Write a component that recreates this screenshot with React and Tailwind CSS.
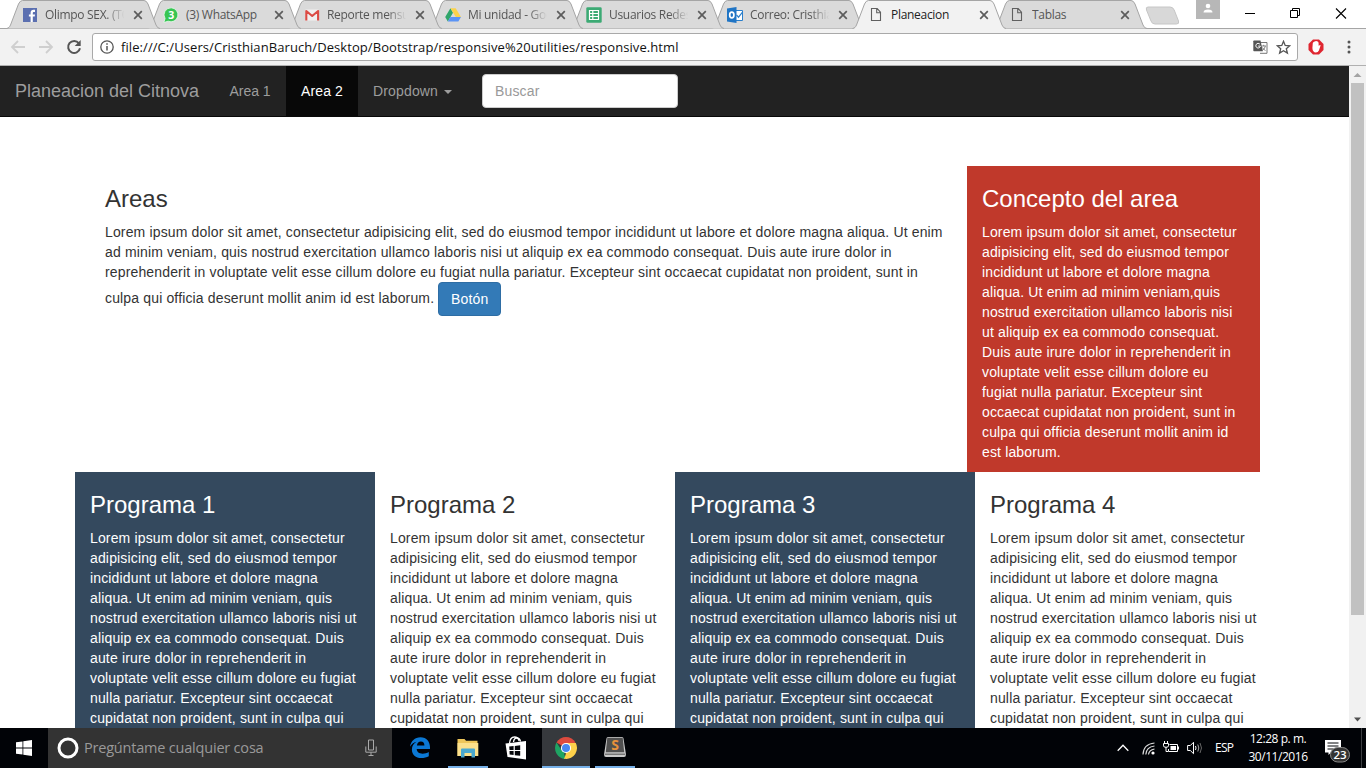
import React from "react";

const AREA_LINES = [
  "Lorem ipsum dolor sit amet, consectetur adipisicing elit, sed do eiusmod tempor incididunt ut labore et dolore magna aliqua. Ut enim",
  "ad minim veniam, quis nostrud exercitation ullamco laboris nisi ut aliquip ex ea commodo consequat. Duis aute irure dolor in",
  "reprehenderit in voluptate velit esse cillum dolore eu fugiat nulla pariatur. Excepteur sint occaecat cupidatat non proident, sunt in",
  "culpa qui officia deserunt mollit anim id est laborum. ",
];
const CONCEPT_LINES = [
  "Lorem ipsum dolor sit amet, consectetur",
  "adipisicing elit, sed do eiusmod tempor",
  "incididunt ut labore et dolore magna",
  "aliqua. Ut enim ad minim veniam,quis",
  "nostrud exercitation ullamco laboris nisi",
  "ut aliquip ex ea commodo consequat.",
  "Duis aute irure dolor in reprehenderit in",
  "voluptate velit esse cillum dolore eu",
  "fugiat nulla pariatur. Excepteur sint",
  "occaecat cupidatat non proident, sunt in",
  "culpa qui officia deserunt mollit anim id",
  "est laborum.",
];
const PROGRAM_LINES = [
  "Lorem ipsum dolor sit amet, consectetur",
  "adipisicing elit, sed do eiusmod tempor",
  "incididunt ut labore et dolore magna",
  "aliqua. Ut enim ad minim veniam, quis",
  "nostrud exercitation ullamco laboris nisi ut",
  "aliquip ex ea commodo consequat. Duis",
  "aute irure dolor in reprehenderit in",
  "voluptate velit esse cillum dolore eu fugiat",
  "nulla pariatur. Excepteur sint occaecat",
  "cupidatat non proident, sunt in culpa qui",
];

const FacebookIcon = () => (
  <svg width="16" height="16" viewBox="0 0 16 16">
    <rect x="1" y="1" width="14" height="14" fill="#5b6fb0" />
    <path d="M8.6 15V9.6H6.9V7.4h1.7V5.8c0-2 1.1-3 2.9-3H13V5h-1c-.9 0-1.2.4-1.2 1.1v1.3H13l-.3 2.2h-1.9V15z" fill="#fff" />
  </svg>
);
const WhatsIcon = () => (
  <svg width="16" height="16" viewBox="0 0 16 16">
    <path d="M8.2 .8a7 7 0 1 1-3.1 13.400L.8 15.500l1.300-4A7 7 0 0 1 8.200.8z" fill="#37c553" stroke="#eefaf0" strokeWidth=".8" />
    <text x="8.2" y="11.8" fontSize="10.5" fontWeight="700" textAnchor="middle" fill="#fff" fontFamily="Open Sans, sans-serif">3</text>
  </svg>
);
const GmailIcon = () => (
  <svg width="16" height="16" viewBox="0 0 16 16">
    <rect x="1.5" y="2.5" width="13" height="11" fill="#f1efef" />
    <path d="M2.3 13.5V4l5.9 5 5.9-5v9.5" fill="none" stroke="#dc4b44" strokeWidth="2.1" strokeLinejoin="round" />
  </svg>
);
const DriveIcon = () => (
  <svg width="16" height="16" viewBox="0 0 16 16">
    <path d="M5.4 1.2 0.2 10l2.6 4.6L8 5.7z" fill="#2fa56a" />
    <path d="M5.4 1.2h5.3L16 10h-5.2z" fill="#fbd24b" />
    <path d="M5.4 10H16l-2.7 4.6H2.8z" fill="#5b94f5" />
  </svg>
);
const SheetsIcon = () => (
  <svg width="16" height="16" viewBox="0 0 16 16">
    <rect x="0.3" y="0.3" width="15.4" height="15.4" rx="1.3" fill="#3caa74" />
    <path d="M3.5 3.5h9v9h-9zM3.5 6.5h9M3.5 9.5h9M6.8 3.5v9" fill="none" stroke="#fff" strokeWidth="1.2" />
  </svg>
);
const OutlookIcon = () => (
  <svg width="16" height="16" viewBox="0 0 16 16">
    <path d="M8 3.5h7.5v10H8z" fill="#fff" stroke="#2a7fcb" />
    <path d="m9.5 7.8 2 2.4 4-5" fill="none" stroke="#2a7fcb" strokeWidth="1.2" />
    <path d="M0 1.5 9.5 0v16L0 14.5z" fill="#2075c5" />
    <ellipse cx="4.8" cy="8" rx="2.1" ry="2.9" fill="none" stroke="#fff" strokeWidth="1.7" />
  </svg>
);
const PageIcon = () => (
  <svg width="16" height="16" viewBox="0 0 16 16">
    <path d="M3.5 1.5h5.7l3.3 3.8v8.2h-9zM8.7 1.5v4.2h3.8" fill="none" stroke="#606060" strokeWidth="1.1" />
  </svg>
);

const TABS = [
  { t: "Olimpo SEX. (TO", icon: <FacebookIcon />, z: "z-[7]", fade: true },
  { t: "(3) WhatsApp", icon: <WhatsIcon />, z: "z-[6]" },
  { t: "Reporte mensu", icon: <GmailIcon />, z: "z-[5]", fade: true },
  { t: "Mi unidad - Goo", icon: <DriveIcon />, z: "z-[4]", fade: true },
  { t: "Usuarios Redes", icon: <SheetsIcon />, z: "z-[3]", fade: true },
  { t: "Correo: Cristhian", icon: <OutlookIcon />, z: "z-[2]", fade: true },
  { t: "Planeacion", icon: <PageIcon />, z: "z-10", active: true },
  { t: "Tablas", icon: <PageIcon />, z: "z-[1]" },
];

function Tab({ tab }) {
  const fill = tab.active ? "#f2f2f2" : "#dadada";
  return (
    <div className={`relative flex h-[29px] w-[154px] shrink-0 items-center pt-[1px] pl-4 -mr-[13px] ${tab.z}`}>
      <svg className="absolute top-0 left-0" width="154" height="29" viewBox="0 0 154 29">
        <path d={tab.active ? "M0.5 29C3 28.5 3.5 27 4.5 25L12.5 4Q14 .5 16.5.5H138Q140.5.5 142 4L150 25Q151.5 28.5 154 29z" : "M0.5 28.5C3 28 3.5 27 4.5 25L12.5 4Q14 .5 16.5.5H138Q140.5.5 142 4L150 25Q151.5 28.5 154 28.5z"} fill={fill} />
        <path d="M0.5 28.5C3 28 3.5 27 4.5 25L12.5 4Q14 .5 16.5.5H138Q140.5.5 142 4L150 25Q151.5 28.5 154 28.5" fill="none" stroke="#a5a5a5" />
      </svg>
      <span className="relative">{tab.icon}</span>
      <span className={`relative ml-[7px] w-[81px] overflow-hidden text-[12px] leading-[16px] tracking-[-0.3px] whitespace-nowrap ${tab.active ? "text-[#222]" : "text-[#555]"} ${tab.fade ? "[mask-image:linear-gradient(to_right,#000_74%,transparent_98%)]" : ""}`}>{tab.t}</span>
      <svg className="relative ml-[7px]" width="10" height="10" viewBox="0 0 10 10">
        <path d="M1.2 1.2l7.6 7.6M8.800 1.2L1.2 8.8" stroke="#5c5c5c" strokeWidth="1.7" />
      </svg>
    </div>
  );
}

function TabStrip() {
  return (
    <div className="relative flex h-[29px] bg-white pl-[6px] shadow-[inset_0_-1px_0_#a5a5a5]">
      {TABS.map((t) => <Tab key={t.t} tab={t} />)}
      <svg className="mt-[6px] ml-[11px] shrink-0" width="36" height="20" viewBox="0 0 36 20">
        <path d="M3 1h22q3 0 4.2 3l4.300 11q1 3-2 3H10q-3 0-4-3L1.5 4Q.5 1 3 1z" fill="#d8d8d8" stroke="#c6c6c6" />
      </svg>
      <div className="ml-[15px] flex h-[19px] w-[24px] justify-center bg-[#b7b7b7]">
        <svg width="12" height="16" viewBox="0 0 12 16">
          <circle cx="6" cy="6" r="2.3" fill="#fff" />
          <path d="M1.5 12.5q0-3 4.5-3t4.5 3z" fill="#fff" />
        </svg>
      </div>
      <svg className="ml-[24px]" width="12" height="27" viewBox="0 0 12 27"><path d="M1 13.5h10" stroke="#000" /></svg>
      <svg className="ml-[33px]" width="12" height="27" viewBox="0 0 12 27"><path d="M1.5 10.500h7v7h-7zM3.500 10V8.500h7v7H9" fill="none" stroke="#000" /></svg>
      <svg className="ml-[34px]" width="12" height="27" viewBox="0 0 12 27"><path d="M1 8.500l10 10M11 8.500l-10 10" stroke="#000" strokeWidth="1.1" /></svg>
    </div>
  );
}

function Toolbar() {
  return (
    <div className="flex h-[37px] items-center border-b border-[#b0b0b0] bg-[#f2f2f2] pl-[10px]">
      <svg width="16" height="16" viewBox="0 0 16 16"><path d="M15 8H2.500M8 2L2 8l6 6" fill="none" stroke="#cfcfcf" strokeWidth="1.8" /></svg>
      <svg className="ml-[12px]" width="16" height="16" viewBox="0 0 16 16"><path d="M1 8h12.500M8 2l6 6-6 6" fill="none" stroke="#cfcfcf" strokeWidth="1.8" /></svg>
      <svg className="ml-[12px]" width="16" height="16" viewBox="0 0 16 16">
        <path d="M12.900 4.300A6 6 0 1 0 14 9.300" fill="none" stroke="#555" strokeWidth="2" />
        <path d="M14.700 1v6H8.700z" fill="#555" />
      </svg>
      <div className="ml-[10px] flex h-[28px] w-[1206px] items-center rounded-[3px] border border-[#a9a9a9] bg-white pl-[7px]">
        <svg width="14" height="14" viewBox="0 0 14 14">
          <circle cx="7" cy="7" r="6.2" fill="none" stroke="#555" strokeWidth="1.3" />
          <path d="M7 6v4.500M7 3.300v1.500" stroke="#555" strokeWidth="1.5" />
        </svg>
        <span className="ml-[7px] w-[1132px] text-[13px] leading-[18px] tracking-[0.08px] whitespace-nowrap text-[#111]">file:///C:/Users/CristhianBaruch/Desktop/Bootstrap/responsive%20utilities/responsive.html</span>
        <svg className="shrink-0" width="15" height="14" viewBox="0 0 15 14">
          <path d="M6.500 2.500h7.500v10.800H7" fill="#fff" stroke="#777" />
          <path d="M8.500 6h4.500M10.700 4.800V6M9 10.500q3-1.500 3.300-4.300M9.500 7.500q1 2.200 3 3" fill="none" stroke="#777" strokeWidth=".9" />
          <path d="M1 .5h6.500l2.300 10.700H1q-.7 0-.7-.7V1.200Q.3.500 1 .5z" fill="#555" />
          <path d="M6.900 4.200a2.300 2.300 0 1 0 .5 1.900H5.200" fill="none" stroke="#fff" strokeWidth="1" />
        </svg>
        <svg className="ml-[8px] shrink-0" width="15" height="15" viewBox="0 0 15 15">
          <path d="M7.500 1.300l1.700 4.100 4.500.4-3.400 2.900 1.100 4.400-3.900-2.400-3.900 2.400 1.100-4.400L1.300 5.800l4.500-.4z" fill="none" stroke="#555" strokeWidth="1.3" />
        </svg>
      </div>
      <svg className="ml-[10px]" width="16" height="16" viewBox="0 0 16 16">
        <path d="M5 .5h6L15.500 5v6L11 15.500H5L.5 11V5z" fill="#df2630" />
        <path d="M4.800 4Q5.500 2.300 6.700 2.400 8 1.700 9 2.300q1.500.3 1.600 1.600v2.800l1.500-.8q.7.100.4.900L10.900 11.500q-.9 2-3 2-3.300-.2-3.500-4.500z" fill="#fff" />
      </svg>
      <svg className="ml-[22px]" width="6" height="16" viewBox="0 0 6 16">
        <circle cx="3" cy="3" r="1.5" fill="#555" /><circle cx="3" cy="8" r="1.5" fill="#555" /><circle cx="3" cy="13" r="1.5" fill="#555" />
      </svg>
    </div>
  );
}

function Navbar() {
  return (
    <nav className="flex h-[51px] items-start border-b border-[#080808] bg-[#222] text-[14px] leading-5 text-[#9d9d9d]">
      <span className="w-[214px] py-[15px] pl-[15px] text-[18px] whitespace-nowrap">Planeacion del Citnova</span>
      <span className="w-[72px] py-[15px] text-center">Area 1</span>
      <span className="w-[72px] bg-[#080808] py-[15px] text-center tracking-[0.1px] text-white">Area 2</span>
      <span className="flex w-[109px] items-center py-[15px] pl-[15px] tracking-[0.15px]">
        Dropdown
        <svg className="ml-[6px] mt-[2px]" width="8" height="4" viewBox="0 0 8 4"><path d="M0 0h8L4 4z" fill="#9d9d9d" /></svg>
      </span>
      <input placeholder="Buscar" className="mt-2 ml-[15px] h-[34px] w-[196px] rounded border border-[#ccc] bg-white px-3 py-1.5 text-[14px] tracking-[0.15px] placeholder:text-[#999]" />
    </nav>
  );
}

function Column({ title, lines, className = "", children }) {
  return (
    <section className={`px-[15px] ${className}`}>
      <h3 className="mt-5 mb-[10px] h-[26px] text-[24px] leading-[26px]">{title}</h3>
      <p className="mb-[10px] tracking-[0.15px] whitespace-pre">
        {lines.map((line, i) => (
          <React.Fragment key={line}>
            {i > 0 && <br />}
            {line}
          </React.Fragment>
        ))}
        {children}
      </p>
    </section>
  );
}

function Page() {
  return (
    <main className="h-[662px] w-[1349px] overflow-hidden bg-white text-[14px] leading-5 text-[#333] [font-family:'Liberation_Sans',Arial,sans-serif]">
      <Navbar />
      <div className="mt-[49px] ml-[90px] flex w-[1170px] items-start">
        <Column title="Areas" className="w-[877px]" lines={AREA_LINES}>
          <button className="inline-block h-[34px] w-[63px] rounded border border-[#2e6da4] bg-[#337ab7] text-center align-middle leading-5 text-white">Botón</button>
        </Column>
        <Column title="Concepto del area" className="w-[293px] bg-[#c0392b] text-white" lines={CONCEPT_LINES} />
      </div>
      <div className="ml-[75px] grid w-[1200px] grid-cols-4">
        <Column title="Programa 1" className="bg-[#34495e] text-white" lines={PROGRAM_LINES} />
        <Column title="Programa 2" lines={PROGRAM_LINES} />
        <Column title="Programa 3" className="bg-[#34495e] text-white" lines={PROGRAM_LINES} />
        <Column title="Programa 4" lines={PROGRAM_LINES} />
      </div>
    </main>
  );
}

function Scrollbar() {
  return (
    <div className="flex h-[662px] w-[17px] flex-col items-center justify-between bg-[#f1f1f1]">
      <div className="flex flex-col items-center">
        <svg width="17" height="17" viewBox="0 0 17 17"><path d="M4.500 11l4-4 4 4z" fill="#a3a3a3" /></svg>
        <div className="h-[532px] w-[13px] bg-[#c1c1c1]" />
      </div>
      <svg width="17" height="17" viewBox="0 0 17 17"><path d="M5 6.500l3.500 4 3.500-4z" fill="#505050" /></svg>
    </div>
  );
}

function Slot({ children, className = "", line }) {
  return (
    <div className={`flex h-10 w-12 flex-col items-center justify-between ${className}`}>
      <div className="flex h-[38px] items-center pt-[1px]">{children}</div>
      <div className={`h-[2px] ${line || ""}`} />
    </div>
  );
}

function Taskbar() {
  return (
    <footer className="flex h-10 items-center bg-[#010307] text-white">
      <div className="flex w-12 justify-center">
        <svg width="16" height="16" viewBox="0 0 16 16"><path d="M0 2.300l6.500-.9v6.200H0zM7.300 1.300L16 0v7.600H7.300zM0 8.400h6.500v6.200L0 13.700zM7.300 8.400H16V16l-8.700-1.300z" fill="#fff" /></svg>
      </div>
      <div className="flex h-10 w-[344px] items-center bg-[#333] pl-[9px]">
        <svg width="22" height="22" viewBox="0 0 22 22"><circle cx="11" cy="11" r="9" fill="none" stroke="#fff" strokeWidth="3" /></svg>
        <span className="ml-[5px] w-[281px] text-[14.5px] tracking-[-0.2px] whitespace-nowrap text-[#9a9a9a]">Pregúntame cualquier cosa</span>
        <svg width="12" height="18" viewBox="0 0 12 18"><path d="M3.500 1h5v10h-5zM.8 7.500v5.700h10.400V7.500M6 13.200v3M3.500 16.500h5" fill="none" stroke="#aaa" /></svg>
      </div>
      <div className="ml-1 flex">
        <Slot>
          <svg width="20" height="21" viewBox="0 0 20 21">
            <path d="M0 9.800C.8 4.100 4.800.2 10.500.2 16.800.2 20 4.900 20 10.200v1.900H6.700c.2 3.200 2.500 4.600 5.900 4.600 2.300 0 4.300-.6 6.200-1.700v4.200c-2 1.200-4.700 1.800-7.400 1.800C5.600 21 1.900 17.700 1.900 12.400c0-3.200 1.700-6 4.600-7.600C3.500 5.300 1.500 7.300 0 9.800zM6.900 8.400h7.500c0-2.300-1.200-3.800-3.500-3.800-2.200 0-3.600 1.500-4 3.800z" fill="#0b78d4" />
          </svg>
        </Slot>
        <Slot line="w-10 bg-[#76b0e8]">
          <svg width="22" height="20" viewBox="0 0 22 20">
            <path d="M.5 1h7l1.500 1.800h11.500V18H.5z" fill="#eec65a" />
            <path d="M.5 5h20.800v13H.5z" fill="#fbe08c" />
            <path d="M4 19.500V11.500q0-1 1-1h12q1 0 1 1v8h-3.500V15h-7v4.500z" fill="#4aa8cf" />
          </svg>
        </Slot>
        <Slot>
          <svg width="22" height="24" viewBox="0 0 22 24">
            <path d="M4.500 7.500Q5 1 9.500 1q3.500 0 4.700 4" fill="none" stroke="#fff" strokeWidth="1.3" />
            <path d="M8.500 6q.5-4 3.300-4 3 0 3.700 3.500" fill="none" stroke="#fff" strokeWidth="1.3" />
            <path d="M.5 7.500L21 5v18.500L2.500 21z" fill="#fff" />
            <path d="M4.200 10.500l4.400-.5v4H4.500zM9.800 9.900l5.400-.6V14H9.800zM4.500 15.100h4.100v4l-4-.5zM9.800 15.100h5.400v4.700l-5.400-.6z" fill="#05070b" />
          </svg>
        </Slot>
        <Slot className="ml-[2px] bg-[#36393d]" line="w-12 bg-[#76b0e8]">
          <svg width="22" height="22" viewBox="0 0 22 22">
            <path d="M11 11L1.500 5.500A11 11 0 0 1 20.500 5.500z" fill="#dd4b3e" />
            <path d="M11 11V6h9.800A11 11 0 0 1 10.500 22z" fill="#fdd04a" />
            <path d="M1.500 5.500L6.700 13.500 11 16l-2 .5L10.800 22A11 11 0 0 1 1.500 5.500z" fill="#1fa463" />
            <path d="M15.300 13.500L10.500 22 9 21.800 12 15z" fill="#fdd04a" />
            <circle cx="11" cy="11" r="5.1" fill="#fff" />
            <circle cx="11" cy="11" r="4" fill="#4688f1" />
          </svg>
        </Slot>
        <Slot className="ml-[1px]" line="w-10 bg-[#76b0e8]">
          <svg width="22" height="22" viewBox="0 0 22 22" className="-mt-[2px]">
            <path d="M2.500 2.500Q2.500 1 4 1h14q1.500 0 1.500 1.500L22 18.500Q22 21 20 21H2q-2 0-2-2.500z" fill="#c9c9c9" />
            <path d="M3.300 1.800h15.400l1.500 14.500H1.800z" fill="#505050" />
            <path d="M1 17.500h20l.3 1.500H.7z" fill="#777" />
            <text x="11" y="14" fontSize="14" fontWeight="700" textAnchor="middle" fill="#e8913b" fontFamily="Open Sans, sans-serif">S</text>
          </svg>
        </Slot>
      </div>
      <div className="ml-auto flex h-10 items-center">
        <svg width="12" height="8" viewBox="0 0 12 8"><path d="M.7 6.700L6 1.300l5.300 5.400" fill="none" stroke="#fff" strokeWidth="1.3" /></svg>
        <svg className="ml-[13px]" width="13" height="13" viewBox="0 0 13 13">
          <path d="M1 12.500Q1.500 2 12.500 1M3.800 12.500Q4.300 5 12.500 4M6.500 12.500Q7 8 12.500 7" fill="none" stroke="#ddd" strokeWidth="1.2" />
          <circle cx="11" cy="11" r="1.6" fill="#fff" />
        </svg>
        <svg className="ml-[8px] -mt-[2px]" width="17" height="14" viewBox="0 0 17 14">
          <path d="M6.500 4.500h8v7h-9V9" fill="none" stroke="#fff" /><path d="M7.500 6h5.500v4H7.500zM14.500 6.500H16v3h-1.500z" fill="#fff" />
          <path d="M1.500 1v2.500M4.500 1v2.500M.5 3.500h5v2.300q0 1.500-2.500 1.500T.5 5.800zM3 7v4.500h2" fill="none" stroke="#fff" />
        </svg>
        <svg className="ml-[7px]" width="16" height="14" viewBox="0 0 16 14">
          <path d="M.6 4.500h2.700L6.500 1.300v11.400L3.300 9.500H.6z" fill="none" stroke="#fff" /><path d="M8.500 5q1 2 0 4" fill="none" stroke="#fff" /><path d="M10.800 3.500q2 3.500 0 7" fill="none" stroke="#aaa" /><path d="M13 2q3 5 0 10" fill="none" stroke="#666" />
        </svg>
        <span className="ml-[12px] w-[20px] text-[12px] tracking-[-0.7px]">ESP</span>
        <div className="ml-[13px] flex w-[60px] flex-col items-center text-[12px] leading-[18px] tracking-[-0.45px] whitespace-nowrap">
          <span>12:28 p. m.</span>
          <span>30/11/2016</span>
        </div>
        <svg className="ml-[16px] mt-[1px]" width="27" height="28" viewBox="0 0 27 28">
          <path d="M1 5h16v12.500H7L4.500 20v-2.500H1z" fill="#fff" />
          <path d="M3.500 8h11M3.500 11h11M3.500 14h6" stroke="#05070b" />
          <rect x="6.5" y="12.5" width="19" height="14.5" rx="7.2" fill="#333" stroke="#888" />
          <text x="16" y="24" fontSize="11.5" textAnchor="middle" fill="#fff" fontFamily="Open Sans, sans-serif" fontWeight="600">23</text>
        </svg>
        <div className="mr-[4px] ml-[10px] h-10 w-px bg-[#3c3e41]" />
      </div>
    </footer>
  );
}

export default function App() {
  return (
    <div className="flex h-[768px] w-[1366px] flex-col overflow-hidden [font-family:'Open_Sans','Noto_Sans',sans-serif]">
      <TabStrip />
      <Toolbar />
      <div className="flex">
        <Page />
        <Scrollbar />
      </div>
      <Taskbar />
    </div>
  );
}
